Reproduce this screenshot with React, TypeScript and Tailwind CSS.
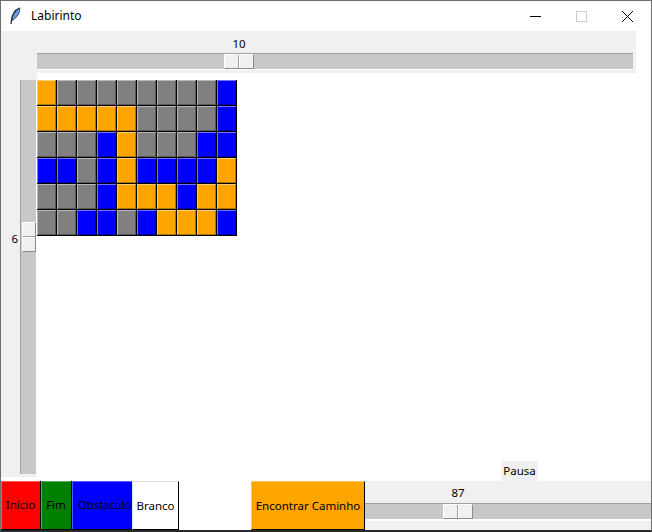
const cores: Record<string, string> = {
  O: "bg-[#ffa500]",
  G: "bg-[#808080]",
  B: "bg-[#0000ff]",
};

const labirinto = [
  "OGGGGGGGGB",
  "OOOOOGGGGB",
  "GGGBOGGGBB",
  "BBGBOBBBBO",
  "GGGBOOOBOO",
  "GGBBGBOOOB",
];

const Handle = ({ vertical = false }: { vertical?: boolean }) =>
  vertical ? (
    <div className="ml-[1px] flex h-[30px] w-[14px] flex-col border-t border-l border-white border-r border-b border-r-[#8a8a8a] border-b-[#8a8a8a] bg-[#f0f0f0]">
      <div className="h-[14px] border-b border-[#a0a0a0]" />
      <div className="flex-1 border-t border-white" />
    </div>
  ) : (
    <div className="flex h-[15px] w-[30px] border-t border-l border-white border-r border-b border-r-[#8a8a8a] border-b-[#8a8a8a] bg-[#f0f0f0]">
      <div className="w-[14px] border-r border-[#a0a0a0]" />
      <div className="flex-1 border-l border-white" />
    </div>
  );

const Botao = ({
  label,
  cor,
  w,
}: {
  label: string;
  cor: string;
  w: string;
}) => (
  <div
    className={`${cor} ${w} flex h-full items-center justify-center overflow-visible whitespace-nowrap border-r border-b border-black shadow-[inset_1px_1px_0_rgba(255,255,255,0.35)] text-black`}>
    {label}
  </div>
);

export default function App() {
  return (
    <div
      className="flex h-[532px] w-[652px] flex-col overflow-hidden border-x border-t border-b-2 border-x-[#6e6e6e] border-t-[#6e6e6e] border-b-[#2a2a2a] bg-white text-[11.5px] text-black"
      style={{ fontFamily: '"Noto Sans", "Open Sans", sans-serif' }}>
      {/* barra de titulo */}
      <div className="flex h-[30px] shrink-0 items-center bg-white">
        <svg width="12" height="18" viewBox="0 0 12 18" className="ml-[8px]">
          <path
            d="M10.5 1 C6 3 3 8 2.5 13 L2 17"
            stroke="#1b1b1b"
            strokeWidth="1.2"
            fill="none"
          />
          <path
            d="M10.5 1 C11.5 5 8 11 3 13.5 C3 9 6 4 10.5 1 Z"
            fill="#6d9be0"
            stroke="#1b2a4a"
            strokeWidth="0.8"
          />
        </svg>
        <span className="ml-[10px] text-[12px] leading-none">Labirinto</span>
        <div className="ml-auto flex items-center">
          <svg width="46" height="30" viewBox="0 0 46 30">
            <line x1="17" y1="15.5" x2="28" y2="15.5" stroke="#000" />
          </svg>
          <svg width="46" height="30" viewBox="0 0 46 30">
            <rect x="17.5" y="10.5" width="10" height="10" stroke="#cccccc" fill="none" />
          </svg>
          <svg width="46" height="30" viewBox="0 0 46 30">
            <path d="M17 10 L28 21 M28 10 L17 21" stroke="#000" strokeWidth="1" />
          </svg>
        </div>
      </div>

      {/* escala horizontal (colunas) */}
      <div className="flex h-[42px] w-[635px] shrink-0 flex-col bg-[#f0f0f0] pt-[5px]">
        <div className="ml-[223px] h-[16px] w-[30px] text-center leading-[16px]">10</div>
        <div className="ml-[36px] mt-[1px] flex h-[17px] w-[596px] border-t border-b border-t-[#a0a0a0] border-b-white bg-[#c8c8c8]">
          <div className="ml-[187px]">
            <Handle />
          </div>
        </div>
      </div>

      {/* area central */}
      <div className="flex h-[408px] shrink-0">
        <div className="flex h-[404px] w-[36px] bg-[#f0f0f0]">
          <div className="mt-[158px] h-[16px] w-[17px] text-right leading-[16px]">6</div>
          <div className="ml-[2px] mt-[7px] flex h-[394px] w-[17px] flex-col border-l border-r border-l-[#a0a0a0] border-r-white bg-[#c8c8c8]">
            <div className="mt-[142px]">
              <Handle vertical />
            </div>
          </div>
        </div>

        <div className="mt-[7px] grid h-fit grid-cols-[repeat(10,20px)]">
          {labirinto.flatMap((linha, i) =>
            linha.split("").map((c, j) => (
              <div
                key={`${i}-${j}`}
                className={`${cores[c]} h-[26px] w-[20px] border-r border-b border-black shadow-[inset_1px_1px_0_rgba(255,255,255,0.45),inset_-1px_-1px_0_rgba(0,0,0,0.3)]`}
              />
            ))
          )}
        </div>

        <div className="flex flex-1 flex-col justify-end">
          <div className="ml-[264px] h-[20px] w-[37px] bg-[#f0f0f0] text-center leading-[20px]">
            Pausa
          </div>
        </div>
      </div>

      {/* barra inferior */}
      <div className="flex h-[49px] shrink-0">
        <Botao label="Inicio" cor="bg-[#ff0000]" w="w-[40px]" />
        <Botao label="Fim" cor="bg-[#008000]" w="w-[31px]" />
        <div className="flex h-full w-[60px] items-center justify-end whitespace-nowrap border-b border-black bg-[#0000ff] pr-[1px] tracking-[-0.2px] shadow-[inset_1px_1px_0_rgba(255,255,255,0.35)]">
          Obstaculo
        </div>
        <div className="flex h-full w-[47px] items-center justify-center border-t border-l border-[#e3e3e3] border-r border-b border-r-black border-b-black bg-white">
          Branco
        </div>
        <div className="w-[72px]" />
        <div className="flex h-full w-[114px] items-center justify-center whitespace-nowrap border-t border-l border-[#ffc95e] border-r border-b border-r-black border-b-black bg-[#ffa500]">
          Encontrar Caminho
        </div>
        <div className="flex flex-1 flex-col bg-[#f0f0f0] pt-[4px]">
          <div className="ml-[78px] h-[16px] w-[30px] text-center leading-[16px]">87</div>
          <div className="mt-[2px] flex h-[18px] border-t border-b-2 border-t-[#a0a0a0] border-b-white bg-[#c8c8c8]">
            <div className="ml-[78px]">
              <Handle />
            </div>
          </div>
        </div>
      </div>
    </div>
  );
}
